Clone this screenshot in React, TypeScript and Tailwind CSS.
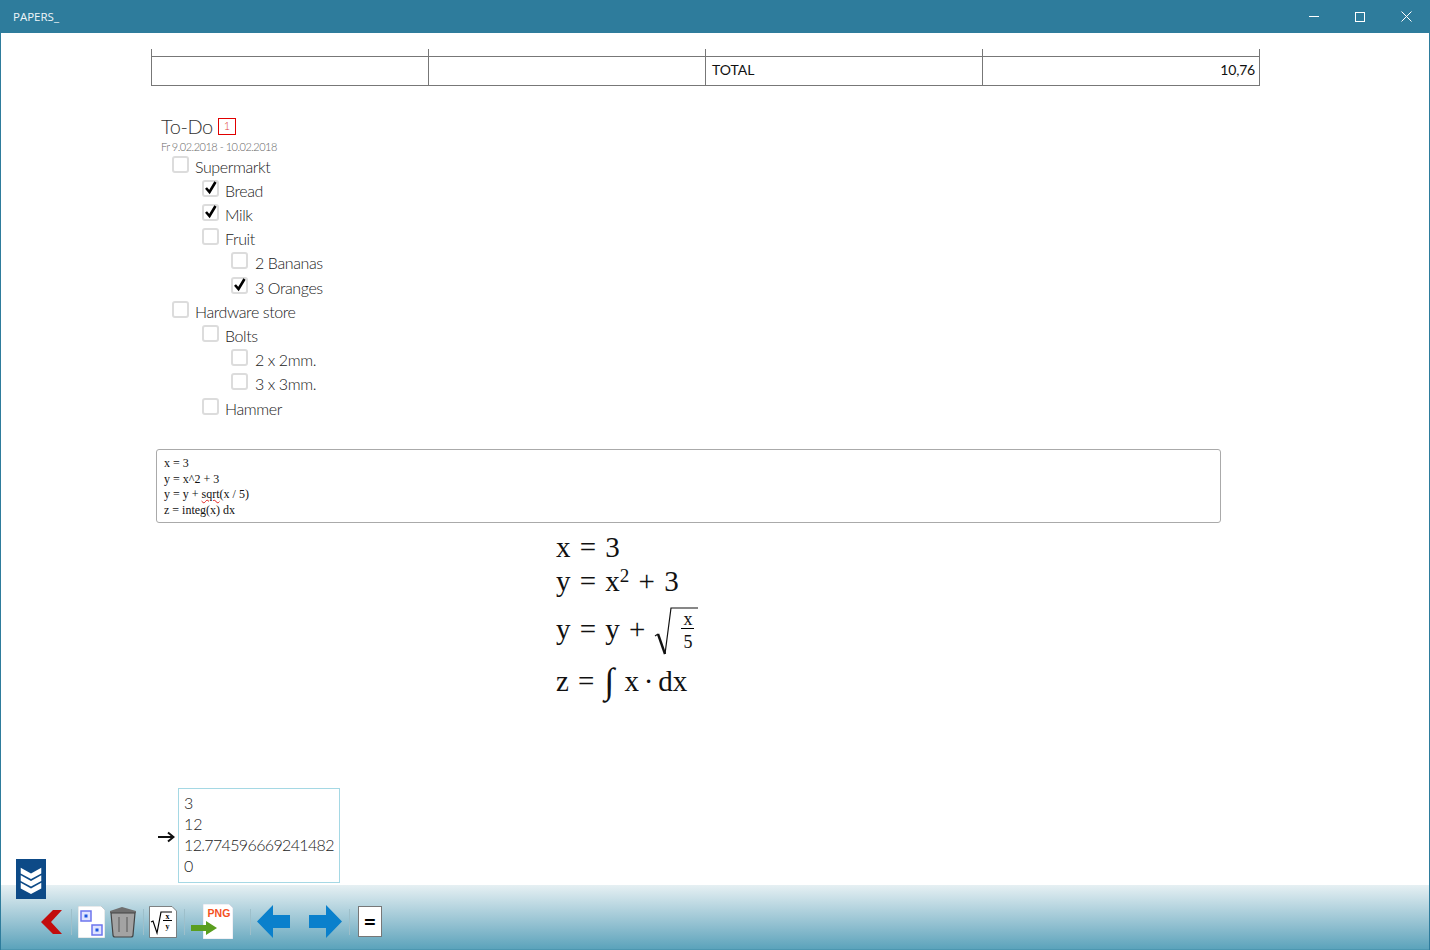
import React from "react";

const todos = [
  { label: "Supermarkt", level: 0, done: false },
  { label: "Bread", level: 1, done: true },
  { label: "Milk", level: 1, done: true },
  { label: "Fruit", level: 1, done: false },
  { label: "2 Bananas", level: 2, done: false },
  { label: "3 Oranges", level: 2, done: true },
  { label: "Hardware store", level: 0, done: false },
  { label: "Bolts", level: 1, done: false },
  { label: "2 x 2mm.", level: 2, done: false },
  { label: "3 x 3mm.", level: 2, done: false },
  { label: "Hammer", level: 1, done: false },
];

const Separator = ({ className }: { className: string }) => (
  <div className={`w-px h-[26px] bg-[#9dbfca] ${className}`} />
);

const TodoRow = ({ label, level, done }: { label: string; level: number; done: boolean }) => (
  <div
    className={`flex h-[24.2px] items-start ${
      level === 0 ? "pl-[21px]" : level === 1 ? "pl-[51px]" : "pl-[80px]"
    }`}
  >
    <div className="relative w-[17px] h-[17px] mt-px rounded-[3px] border-2 border-[#dcdcdc] bg-white shrink-0">
      {done && (
        <svg viewBox="0 0 17 17" className="absolute left-[-2px] top-[-3px] w-[17px] h-[17px]">
          <path d="M4 9 L7.5 13 L13.5 3" fill="none" stroke="#000" strokeWidth="2.6" />
        </svg>
      )}
    </div>
    <span
      className={`text-[16px] leading-[24px] font-light text-[#222] tracking-[-0.4px] ${
        level === 2 ? "ml-[7px]" : "ml-[6px]"
      }`}
    >
      {label}
    </span>
  </div>
);

const Frac = ({ top, bottom }: { top: string; bottom: string }) => (
  <span className="flex flex-col items-center w-[13px] text-[18px] leading-[17px]">
    <span className="w-full text-center border-b border-black">{top}</span>
    <span className="pt-[5px]">{bottom}</span>
  </span>
);

const Formula = () => (
  <div
    className="ml-[405px] mt-[7px] h-[174px] text-[29px] leading-[34px] text-[#111] [word-spacing:2px]"
    style={{ fontFamily: '"Liberation Serif", serif' }}
  >
    <div className="h-[34px]">x = 3</div>
    <div className="h-[36px]">
      y = x<sup className="text-[19px]">2</sup> + 3
    </div>
    <div className="flex h-[58px] items-center">
      <span>y = y +</span>
      <svg viewBox="0 0 44 50" className="w-[44px] h-[50px] ml-[9px] mt-[3px]">
        <path d="M1 30 L4 28" fill="none" stroke="#111" strokeWidth="1.2" />
        <path d="M4 28 L11 48" fill="none" stroke="#111" strokeWidth="2.4" />
        <path d="M11 48 L17 2 L44 2" fill="none" stroke="#111" strokeWidth="1.2" />
      </svg>
      <div className="ml-[-17px] mt-[3px]">
        <Frac top="x" bottom="5" />
      </div>
    </div>
    <div className="flex h-[46px] items-center">
      <span>z =</span>
      <span className="ml-[10px] w-[19px] text-[36px] italic leading-none">∫</span>
      <span className="ml-[1px] [word-spacing:-2.5px]">x · dx</span>
    </div>
  </div>
);

export default function App() {
  return (
    <div
      className="relative flex flex-col w-[1430px] h-[950px] overflow-hidden bg-white border-x border-[#2e7c9c]"
      style={{ fontFamily: 'Lato, "Open Sans", sans-serif' }}
    >
      {/* Title bar */}
      <div className="flex items-center justify-between h-[33px] -mx-px pr-px bg-[#2e7c9c] text-white shrink-0">
        <span className="ml-[13px] text-[11.5px] text-[#eef6f9]" style={{ fontFamily: '"Open Sans", sans-serif' }}>
          PAPERS_
        </span>
        <div className="flex items-center">
          <button className="flex items-center justify-center w-[46px] h-[33px]">
            <div className="w-[10px] h-px bg-white" />
          </button>
          <button className="flex items-center justify-center w-[46px] h-[33px]">
            <div className="w-[10px] h-[10px] border border-white" />
          </button>
          <button className="flex items-center justify-center w-[46px] h-[33px]">
            <svg viewBox="0 0 11 11" className="w-[11px] h-[11px]">
              <path d="M0.5 0.5 L10.5 10.5 M10.5 0.5 L0.5 10.5" stroke="#fff" strokeWidth="1" />
            </svg>
          </button>
        </div>
      </div>

      {/* Document */}
      <div className="flex-1 overflow-hidden pl-[150px] pt-[16px]">
        <div className="grid grid-cols-[277px_277px_277px_276px] w-[1109px] h-[37px] border-x border-b border-[#777]">
          <div className="border-r border-[#777]">
            <div className="h-[8px] border-b border-[#777]" />
          </div>
          <div className="border-r border-[#777]">
            <div className="h-[8px] border-b border-[#777]" />
          </div>
          <div className="border-r border-[#777]">
            <div className="h-[8px] border-b border-[#777]" />
            <div className="pl-[6px] text-[14px] leading-[26px] text-[#111]">TOTAL</div>
          </div>
          <div>
            <div className="h-[8px] border-b border-[#777]" />
            <div className="pr-[4px] text-right text-[14px] leading-[26px] tracking-[-0.2px] text-[#111]">10,76</div>
          </div>
        </div>

        {/* To-Do */}
        <div className="mt-[27px] ml-[10px] flex items-center h-[26px]">
          <span className="text-[20px] font-light text-[#333] leading-[26px] tracking-[-0.4px]">To-Do</span>
          <span className="flex items-center justify-center ml-[5px] w-[18px] h-[17px] border border-[#e00000] text-[11px] font-light text-[#e04040]">
            1
          </span>
        </div>
        <div className="ml-[10px] mt-px text-[11px] leading-[14px] text-[#666] tracking-[-0.5px] font-light">
          Fr 9.02.2018 - 10.02.2018
        </div>
        <div className="mt-[0.7px]">
          {todos.map((t) => (
            <TodoRow key={t.label} {...t} />
          ))}
        </div>

        {/* Formula source */}
        <div
          className="mt-[28.3px] ml-[5px] w-[1065px] h-[74px] rounded-[3px] border border-[#aaa] pl-[7px] pt-[6px] text-[12px] leading-[15.5px] text-[#111]"
          style={{ fontFamily: '"Liberation Serif", serif' }}
        >
          <div>x = 3</div>
          <div>y = x^2 + 3</div>
          <div>
            y = y + <span className="underline decoration-wavy decoration-1 underline-offset-1 decoration-[#e02020]">sqrt</span>(x / 5)
          </div>
          <div>z = integ(x) dx</div>
        </div>

        <Formula />

        {/* Result */}
        <div className="flex items-center mt-[84px] ml-[7px]">
          <svg viewBox="0 0 17 12" className="w-[17px] h-[12px] mt-[2px]">
            <path d="M0 6 H15 M10 1.5 L15.5 6 L10 10.5" fill="none" stroke="#111" strokeWidth="2" />
          </svg>
          <div className="ml-[3px] w-[162px] h-[95px] border border-[#a5d8e4] pl-[5px] pt-[3px] text-[16px] leading-[21px] font-light text-[#222]">
            <div>3</div>
            <div>12</div>
            <div className="tracking-[-0.65px]">12.774596669241482</div>
            <div>0</div>
          </div>
        </div>
      </div>

      {/* Toolbar */}
      <div className="flex items-center h-[65px] -mx-px pl-[41px] pt-[9px] bg-gradient-to-b from-[#e6f0f3] to-[#5ba3bb] border-b border-[#4d97b0] shrink-0">
        <svg viewBox="0 0 22 24" className="w-[22px] h-[24px]">
          <path d="M21 0 H12 L0 12 L12 24 H21 L10 12 Z" fill="#c20d0d" />
        </svg>
        <Separator className="ml-[8px] mr-[6px]" />
        <svg viewBox="0 0 27 32" className="w-[27px] h-[32px]">
          <path d="M0 0 H23 L27 4 V32 H0 Z" fill="#fff" stroke="#b0b8bc" strokeWidth="0.6" />
          <rect x="3" y="5" width="10" height="10" fill="#dfe3ff" stroke="#6c75ee" strokeWidth="1.5" />
          <rect x="6.5" y="8.5" width="3" height="3" fill="#1a55dd" />
          <rect x="14" y="19" width="10" height="10" fill="#dfe3ff" stroke="#6c75ee" strokeWidth="1.5" />
          <rect x="17.5" y="22.5" width="3" height="3" fill="#1a55dd" />
        </svg>
        <svg viewBox="0 0 28 33" className="w-[28px] h-[33px] ml-[4px]">
          <path d="M1 6 L13 2 L27 6 L27 8 L1 8 Z" fill="#6f6f6f" />
          <path d="M2 8 H26 L24 30 Q24 32 22 32 H6 Q4 32 4 30 Z" fill="#a3a3a3" stroke="#444" strokeWidth="1.2" />
          <path d="M10 12 V27 M18 12 V27" stroke="#7d7d7d" strokeWidth="2" />
        </svg>
        <Separator className="ml-[6px] mr-[5px]" />
        <svg viewBox="0 0 28 32" className="w-[28px] h-[32px]">
          <path d="M0.5 0.5 H23 L27.5 5 V31.5 H0.5 Z" fill="#fff" stroke="#666" strokeWidth="0.8" />
          <path d="M2 16 L4 15 L8 27 L12 6 H23" fill="none" stroke="#000" strokeWidth="1.2" />
          <path d="M14 14.5 H23" stroke="#000" strokeWidth="1" />
          <text x="18.5" y="12.5" fontSize="8" fontWeight="700" textAnchor="middle" fontFamily="Liberation Serif">x</text>
          <text x="18.5" y="23" fontSize="8" fontWeight="700" textAnchor="middle" fontFamily="Liberation Serif">y</text>
        </svg>
        <Separator className="ml-[7px]" />
        <div className="relative w-[30px] h-[35px] ml-[18px]">
          <svg viewBox="0 0 30 35" className="absolute inset-0 w-[30px] h-[35px]">
            <path d="M0 0 H26 L30 4 V35 H0 Z" fill="#fff" stroke="#ccd" strokeWidth="0.6" />
            <text x="16" y="13" fontSize="10.5" fontWeight="700" textAnchor="middle" fill="#f4511e" fontFamily="Liberation Sans">PNG</text>
          </svg>
          <svg viewBox="0 0 26 14" className="absolute left-[-12px] top-[17px] w-[26px] h-[14px]">
            <path d="M0 4 H15 V0 L26 7 L15 14 V10 H0 Z" fill="#5a9e1e" />
          </svg>
        </div>
        <Separator className="ml-[17px] mr-[6px]" />
        <svg viewBox="0 0 33 33" className="w-[33px] h-[33px]">
          <path d="M0 16.5 L16 0 V10 H33 V23 H16 V33 Z" fill="#0a80cc" />
        </svg>
        <svg viewBox="0 0 33 33" className="w-[33px] h-[33px] ml-[19px]">
          <path d="M33 16.5 L17 0 V10 H0 V23 H17 V33 Z" fill="#0a80cc" />
        </svg>
        <Separator className="ml-[7px] mr-[8px]" />
        <div className="flex items-center justify-center w-[24px] h-[31px] bg-white border border-[#777] text-[22px] font-bold text-black">
          =
        </div>
      </div>

      {/* Collapse button sits over the document */}
      <div className="absolute left-[15px] top-[859px] flex items-center justify-center w-[30px] h-[40px] bg-[#0d4a87]">
        <svg viewBox="0 0 22 30" className="w-[22px] h-[28px] mt-[2px]">
          <path d="M0 2 L11 8 L22 2 V8 L11 14 L0 8 Z M0 10 L11 16 L22 10 V16 L11 22 L0 16 Z M0 18 L11 24 L22 18 V24 L11 30 L0 24 Z" fill="#fff" />
        </svg>
      </div>
    </div>
  );
}
